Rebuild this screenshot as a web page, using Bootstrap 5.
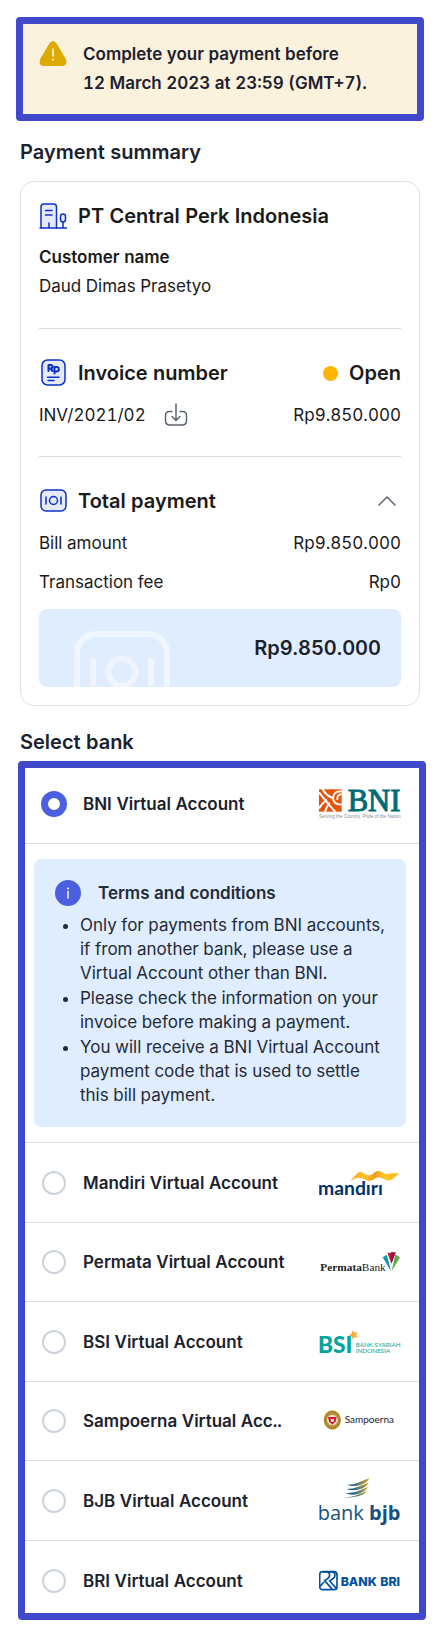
<!DOCTYPE html>
<html lang="en">
<head>
<meta charset="utf-8">
<meta name="viewport" content="width=device-width, initial-scale=1">
<title>Payment</title>
<link href="https://cdn.jsdelivr.net/npm/bootstrap@5.3.0/dist/css/bootstrap.min.css" rel="stylesheet">
<style>
  :root { --frame: #4048cc; --ink: #1b212d; --line: #e1e1e1; --sky: #e0edff; }
  body { font-family: Inter, "Liberation Sans", sans-serif; font-size: 17px; line-height: 28px; font-variant-numeric: tabular-nums; color: #1a1a1a; background: #fff; }
  .page { padding: 17px 16px 19px; }
  .framed { border: 7px solid var(--frame); border-radius: 4px; }
  .deadline { background: #fbf2dd; color: var(--ink); padding: 16px; gap: 16px; line-height: 29px; }
  .section-title { font-size: 20px; line-height: 28px; font-weight: 600; color: var(--ink); margin: 17px 4px 15px; }
  .bank-title { margin-top: 22px; margin-bottom: 5px; }
  .summary { margin: 0 4px; padding: 20px 18px 18px; border: 1px solid var(--line); border-radius: 14px; }
  .block-title { font-size: 20px; line-height: 28px; font-weight: 600; margin: 0; gap: 11px; }
  .block-title svg { flex: none; }
  .customer { line-height: 29px; margin-top: 13px; }
  .rule { border: 0; border-top: 1px solid #dcdcdc; opacity: 1; margin: 27px 0 30px; }
  .row-gap-top { margin-top: 14px; }
  .status-dot { width: 15px; height: 15px; background: #ffb400; }
  .icon-btn { border: 0; background: none; padding: 0; width: 28px; height: 28px; line-height: 0; color: #5b6475; }
  .fee { margin-top: 11px; }
  .total { position: relative; overflow: hidden; height: 78px; margin-top: 13px; padding: 0 20px; background: var(--sky); border-radius: 8px; font-size: 20px; color: var(--ink); }
  .total svg { position: absolute; left: 35px; top: 22px; }
  .banks { margin: 0 -2px 0 2px; color: var(--ink); }
  .bank { display: grid; grid-template-columns: 26px 1fr 82px; column-gap: 16px; align-items: center; height: 79px; padding: 0 18px 0 16px; border-bottom: 1px solid #dedede; font-weight: 600; cursor: pointer; }
  .bank svg { font-weight: 400; }
  .bank:nth-of-type(even) { height: 80px; }
  .bank:first-of-type { height: 76px; padding-bottom: 4px; }
  .bank:last-of-type { height: 72px; padding-top: 7px; border-bottom: 0; }
  .bank .form-check-input { width: 24px; height: 24px; margin: 0 1px; border: 2px solid #ccd3dd; box-shadow: none; background-image: none; }
  .bank .form-check-input:checked { width: 26px; height: 26px; margin: 0; border: 7px solid #4c5fe0; background: #fff; }
  .terms { margin: 15px 13px 15px 9px; padding: 20px 16px 19px 21px; background: var(--sky); border-radius: 7px; color: #232b38; }
  .terms-wrap { border-bottom: 1px solid #dedede; }
  .terms h3 { font-size: 17px; line-height: 28px; font-weight: 600; margin: 0 0 6px; gap: 17px; }
  .terms ul { margin: 0; padding-left: 25px; line-height: 24px; }
  .terms li { margin-bottom: 1px; }
</style>
</head>
<body>
<main class="page">
  <div class="framed deadline d-flex fw-semibold" role="alert">
    <svg class="flex-shrink-0" width="28" height="28" viewBox="0 0 28 28" aria-hidden="true">
      <path d="M10.4 3.4Q14-1.600 17.600 3.400L26.500 18.500Q29.200 25.500 23 26H5Q-1.200 25.500 1.500 18.500Z" fill="#dea900"/>
      <path d="M14 9v7" stroke="#fff" stroke-width="1.500" stroke-linecap="round"/><circle cx="14" cy="19.500" r="1" fill="#fff"/>
    </svg>
    <div>Complete your payment before<br>12 March 2023 at 23:59 (GMT+7).</div>
  </div>

  <h1 class="section-title">Payment summary</h1>
  <section class="summary">
    <h2 class="block-title d-flex align-items-center">
      <svg width="28" height="28" viewBox="0 0 28 28" fill="none" stroke="#0a32c8" stroke-width="1.500" stroke-linecap="round" aria-hidden="true">
        <path d="M2 26V5Q2 2 5 2h9.500q3 0 3 3v21" fill="#e6e9f8"/><path d="M1 26h27M6.500 8.500h6.500M6.500 13h6.500M10 26v-5M24 26v-8"/><rect x="21.500" y="12" width="5" height="8" rx="2.500" fill="#e6e9f8"/>
      </svg>
      PT Central Perk Indonesia
    </h2>
    <div class="customer">
      <div class="fw-semibold">Customer name</div>
      <div>Daud Dimas Prasetyo</div>
    </div>
    <hr class="rule">
    <div class="d-flex justify-content-between align-items-center">
      <h2 class="block-title d-flex align-items-center">
        <svg width="28" height="28" viewBox="0 0 28 28" fill="none" stroke="#0a32c8" stroke-width="1.500" stroke-linecap="round" stroke-linejoin="round" aria-hidden="true">
          <rect x="3" y="1" width="23" height="25" rx="5.500" fill="#e6e9f8"/>
          <path stroke-width="2" d="M9.500 12V6h2q2 0 2 1.800t-2 1.800h-2m2 0 2 2.400M15.500 14.500V8h2q2.300 0 2.300 2.200t-2.300 2.200h-2"/><path d="M8.500 18.200h11.500M9 21.500h6"/>
        </svg>
        Invoice number
      </h2>
      <div class="block-title d-flex align-items-center"><span class="status-dot rounded-circle"></span>Open</div>
    </div>
    <div class="row-gap-top d-flex align-items-center">
      <span>INV/2021/02</span>
      <button class="icon-btn ms-3" type="button" aria-label="Download invoice">
        <svg width="24" height="24" viewBox="0 0 24 24" fill="none" stroke="currentColor" stroke-width="1.500" stroke-linecap="round" stroke-linejoin="round"><path d="M8 8.500H5.500Q1.500 8.500 1.500 12.500v5q0 4.500 4.500 4.500h12q4.500 0 4.500-4.500v-5q0-4-4-4H16M12 1v16M8 13.500l4 4 4-4"/></svg>
      </button>
      <span class="ms-auto">Rp9.850.000</span>
    </div>
    <hr class="rule">
    <div class="d-flex justify-content-between align-items-center">
      <h2 class="block-title d-flex align-items-center">
        <svg width="28" height="28" viewBox="0 0 28 28" fill="none" stroke="#0a32c8" stroke-width="1.500" stroke-linecap="round" aria-hidden="true">
          <rect x="2" y="3" width="25" height="21" rx="5" fill="#e6e9f8"/><circle cx="14.500" cy="13.500" r="4"/><path d="M7 10v7M22 10v7"/>
        </svg>
        Total payment
      </h2>
      <button class="icon-btn" type="button" data-bs-toggle="collapse" data-bs-target="#details" aria-expanded="true" aria-controls="details" aria-label="Toggle payment details">
        <svg width="18" height="10" viewBox="0 0 18 10" fill="none" stroke="currentColor" stroke-width="1.500" stroke-linecap="round" stroke-linejoin="round"><path d="M1 9l8-8 8 8"/></svg>
      </button>
    </div>
    <div class="collapse show" id="details">
      <div class="row-gap-top d-flex justify-content-between"><span>Bill amount</span><span>Rp9.850.000</span></div>
      <div class="fee d-flex justify-content-between"><span>Transaction fee</span><span>Rp0</span></div>
    </div>
    <div class="total d-flex align-items-center justify-content-end fw-semibold">
      <svg width="96" height="80" viewBox="0 0 96 80" fill="none" stroke="#f0f6ff" stroke-width="6" stroke-linecap="round" aria-hidden="true">
        <rect x="3" y="3" width="90" height="74" rx="19"/><circle cx="48" cy="41" r="13.500"/><path d="M19 30v22M77 30v22"/>
      </svg>
      Rp9.850.000
    </div>
  </section>

  <h1 class="section-title bank-title">Select bank</h1>
  <form class="framed banks">
    <label class="bank">
      <input class="form-check-input" type="radio" name="bank" checked>
      <span>BNI Virtual Account</span>
      <svg width="82" height="48" viewBox="0 0 246 144" role="img" aria-label="BNI">
        <rect y="28" width="68" height="67" fill="#e85206"/>
        <g fill="none" stroke="#fff" stroke-width="6"><path d="M0 37Q20 63 49 96M11 27Q20 47 44 55M24 59Q13 66 0 85M32 68Q23 78 18 96"/><path d="M68 34Q44 34 42 53q0 20 26 21M68 43q-15 0-13 17"/></g>
        <text x="86" y="94" font-family="Liberation Serif, serif" font-size="92" fill="#006b78" stroke="#006b78" stroke-width="3">BNI</text>
        <text x="0" y="114" font-family="Liberation Sans, sans-serif" font-size="14" fill="#8c8c8c">Serving the Country, Pride of the Nation</text>
      </svg>
    </label>
    <div class="terms-wrap overflow-hidden">
      <div class="terms">
        <h3 class="d-flex align-items-center">
          <svg width="26" height="26" viewBox="0 0 26 26" aria-hidden="true"><circle cx="13" cy="13" r="13" fill="#4c5fe0"/><path d="M13 11.500v6.500" stroke="#fff" stroke-width="1.500" stroke-linecap="round"/><circle cx="13" cy="8.500" r="1" fill="#fff"/></svg>
          Terms and conditions
        </h3>
        <ul>
          <li>Only for payments from BNI accounts, if from another bank, please use a Virtual Account other than BNI.</li>
          <li>Please check the information on your invoice before making a payment.</li>
          <li>You will receive a BNI Virtual Account payment code that is used to settle this bill payment.</li>
        </ul>
      </div>
    </div>
    <label class="bank">
      <input class="form-check-input" type="radio" name="bank">
      <span>Mandiri Virtual Account</span>
      <svg width="82" height="48" viewBox="0 0 246 144" role="img" aria-label="Mandiri">
        <defs><linearGradient id="gold" x1="0" x2="1"><stop offset="0" stop-color="#f6a21b"/><stop offset=".3" stop-color="#ffc72c"/><stop offset=".5" stop-color="#f39a1d"/><stop offset=".7" stop-color="#ffc72c"/><stop offset="1" stop-color="#fbb41c"/></linearGradient></defs>
        <path d="M94 65L115 43Q121 37 130 40Q141 50 153 49Q161 46 169 38Q178 34 188 39Q201 49 216 43L241 43L225 57Q214 67 203 64L181 55Q173 53 165 61Q153 69 142 64L125 57Q113 54 94 65Z" fill="url(#gold)"/>
        <text x="-3" y="107" font-family="Lato, sans-serif" font-weight="700" font-size="58" fill="#00326a">mandırı</text>
      </svg>
    </label>
    <label class="bank">
      <input class="form-check-input" type="radio" name="bank">
      <span>Permata Virtual Account</span>
      <svg width="82" height="48" viewBox="0 0 246 144" role="img" aria-label="PermataBank">
        <text x="4" y="99" font-family="Liberation Serif, serif" font-size="34" fill="#222"><tspan font-weight="700">Permata</tspan>Bank</text>
        <path d="M205 44h25l-13 33z" fill="#c61f3f"/><path d="M216 43h14l-13 34z" fill="#8f1239"/>
        <path d="M191 58l12-8 12 48z" fill="#1598a8"/><path d="M203 50l12 48-6-18z" fill="#005f7c"/>
        <path d="M231 50l12 8-25 42z" fill="#5daa46"/><path d="M229 51l2 0-13 48z" fill="#14723d"/>
      </svg>
    </label>
    <label class="bank">
      <input class="form-check-input" type="radio" name="bank">
      <span>BSI Virtual Account</span>
      <svg width="82" height="48" viewBox="0 0 246 144" role="img" aria-label="BSI">
        <text x="-3" y="106" font-family="Lato, sans-serif" font-weight="900" font-size="68" fill="#00a39d">BSI</text>
        <path d="M101 37l6 7 9-2-4 9 4 8-9-1-6 7-2-9-9-4 8-5z" fill="#f8ad3c"/>
        <text x="110" y="87" font-family="Lato, sans-serif" font-size="19" fill="#00a39d">BANK SYARIAH</text>
        <text x="110" y="106" font-family="Lato, sans-serif" font-size="19" fill="#00a39d">INDONESIA</text>
      </svg>
    </label>
    <label class="bank">
      <input class="form-check-input" type="radio" name="bank">
      <span>Sampoerna Virtual Acc..</span>
      <svg width="82" height="48" viewBox="0 0 246 144" role="img" aria-label="Sampoerna">
        <ellipse cx="40" cy="69" rx="26" ry="29" fill="#b99335"/><ellipse cx="40" cy="69" rx="21" ry="24" fill="none" stroke="#806127" stroke-width="3" stroke-dasharray="3 3"/><circle cx="40" cy="69" r="16" fill="#f1ddd0"/><path d="M27 60h26l-3 13-10 10-10-10z" fill="#c9182b"/><path d="M34 64l6 4 6-4-3 11h-6z" fill="#fff"/>
        <text x="77" y="79" font-family="Lato, sans-serif" font-size="30" fill="#252525">Sampoerna</text>
      </svg>
    </label>
    <label class="bank">
      <input class="form-check-input" type="radio" name="bank">
      <span>BJB Virtual Account</span>
      <svg width="82" height="48" viewBox="0 0 246 144" role="img" aria-label="bank bjb">
        <defs><linearGradient id="wing" x1="0" x2="1"><stop offset=".3" stop-color="#17608f"/><stop offset="1" stop-color="#dba927"/></linearGradient></defs>
        <path d="M84 23Q104 23 117 17T151 4Q145 18 124 24T84 23ZM82 36Q103 36 116 30T149 17Q143 31 122 37T82 36ZM79 49Q102 48 115 43T147 30Q141 43 120 50T79 49ZM76 62Q100 60 113 55T143 42Q138 53 116 58T76 62Z" fill="url(#wing)"/>
        <text x="-4" y="128" font-family="Open Sans, sans-serif" font-size="60" fill="#17507f">bank <tspan font-weight="700">bjb</tspan></text>
      </svg>
    </label>
    <label class="bank">
      <input class="form-check-input" type="radio" name="bank">
      <span>BRI Virtual Account</span>
      <svg width="82" height="48" viewBox="0 0 246 144" role="img" aria-label="BANK BRI">
        <rect x="2" y="44" width="52" height="54" rx="9" fill="none" stroke="#00529c" stroke-width="5"/>
        <path d="M12 45h10q10 0 10 10 0 7-9 12l-6 4 23 26M28 45h10q10 0 10 10 0 7-9 12l-7 5 20 22M3 88l12-13" fill="none" stroke="#00529c" stroke-width="5"/>
        <text x="65" y="86" font-family="Inter, sans-serif" font-weight="800" font-size="37" fill="#00529c">BANK BRI</text>
      </svg>
    </label>
  </form>
</main>
<script src="https://cdn.jsdelivr.net/npm/bootstrap@5.3.0/dist/js/bootstrap.bundle.min.js"></script>
</body>
</html>
